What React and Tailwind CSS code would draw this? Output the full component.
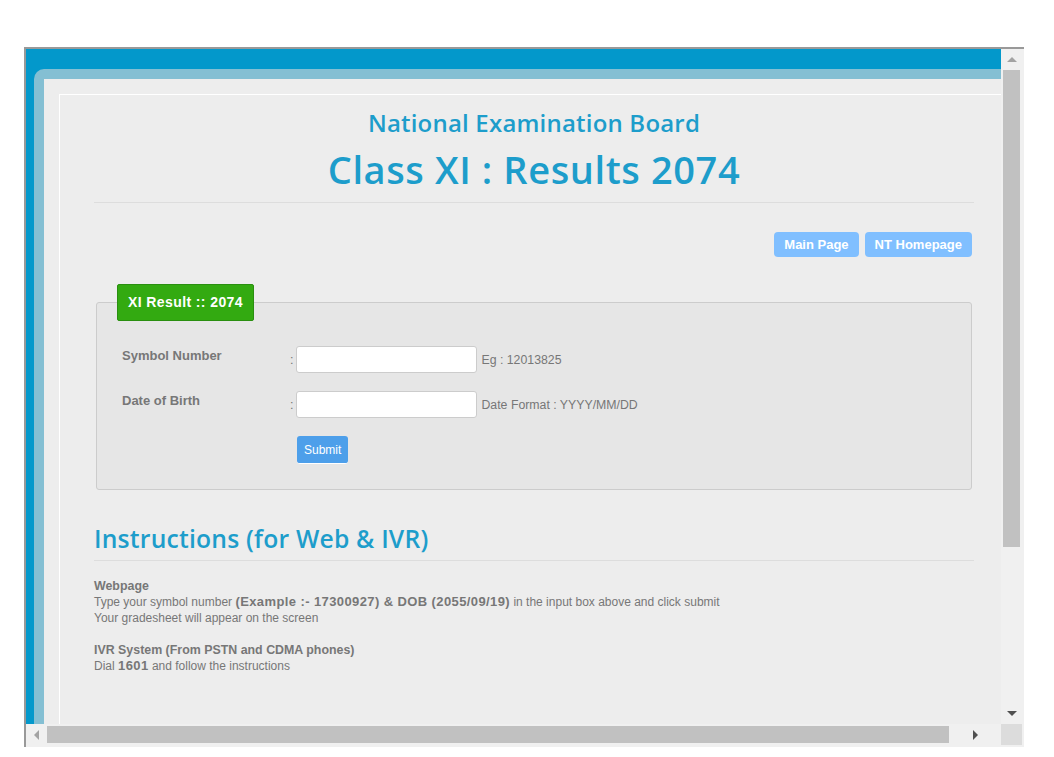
import React from 'react';

const head = { fontFamily: '"Open Sans", "DejaVu Sans", sans-serif' };

const ScrollArrow = ({ dir }) => {
  const pts = {
    up: '0,5 5,0 10,5',
    down: '0,0 10,0 5,5',
    left: '5,0 5,10 0,5',
    right: '0,0 5,5 0,10',
  }[dir];
  const vertical = dir === 'up' || dir === 'down';
  return (
    <svg width={vertical ? 10 : 5} height={vertical ? 5 : 10} viewBox={vertical ? '0 0 10 5' : '0 0 5 10'}>
      <polygon points={pts} fill={dir === 'down' || dir === 'right' ? '#505050' : '#a3a3a3'} />
    </svg>
  );
};

const FieldRow = ({ label, hint }) => (
  <div className="flex items-start">
    <div className="w-[168px] font-bold text-[13px] text-[#777]">{label}</div>
    <div className="flex items-center">
      <span className="text-[12.5px] text-[#777] mr-[3px] mt-[2px]">:</span>
      <input className="w-[181px] h-[27px] bg-white border border-[#ccc] rounded-[3px] outline-none" />
      <span className="ml-[4px] mt-[2px] text-[12.3px] text-[#777]">{hint}</span>
    </div>
  </div>
);

export default function App() {
  return (
    <div className="min-h-[757px] bg-white pt-[47px] pl-[24px]" style={{ fontFamily: '"Liberation Sans", Arial, sans-serif' }}>
      <div className="w-[1000px] h-[700px] border-t-2 border-l-2 border-[#999] bg-[#f0f0f0] flex flex-col">
        <div className="flex h-[675px]">
          {/* viewport */}
          <div className="w-[975px] h-full overflow-hidden bg-[#0398cb] pl-[8px] pt-[20px]">
            <div className="w-[1040px] bg-[#84bfd3] rounded-tl-[10px] pl-[10px] pt-[10px]">
              <div className="bg-[#ededed] pl-[15px] pt-[15px] pb-[40px]">
                <div className="w-[950px] border border-white px-[34px] pt-[10px] pb-[60px]">
                  <h1 className="text-center text-[#1d9dcb] text-[24px] font-semibold leading-[36px] tracking-[0.2px]" style={head}>
                    National Examination Board
                  </h1>
                  <h2 className="text-center text-[#1d9dcb] text-[38px] font-semibold leading-[50px] mt-[3px] tracking-[0.6px]" style={head}>
                    Class XI : Results 2074
                  </h2>
                  <div className="mt-[8px] h-px bg-[#ddd]" />

                  <div className="flex justify-end gap-[6px] mt-[29px] mr-[2px]">
                    <button className="h-[25px] px-[10px] rounded-[4px] bg-[#80bfff] text-white font-bold text-[13px]">
                      Main Page
                    </button>
                    <button className="h-[25px] px-[10px] rounded-[4px] bg-[#80bfff] text-white font-bold text-[13px]">
                      NT Homepage
                    </button>
                  </div>

                  {/* fieldset */}
                  <div className="relative mt-[45px] ml-[2px] w-[876px] h-[188px] bg-[#e6e6e6] border border-[#ccc] rounded-[3px]">
                    <div className="absolute left-[20px] top-[-19px] h-[37px] px-[10px] flex items-center bg-[#33aa11] border border-[#2a8f10] rounded-[2px] text-white font-bold text-[14px] tracking-[0.4px]">
                      XI Result :: 2074
                    </div>
                    <div className="pt-[43px] pl-[25px] flex flex-col gap-[18px]">
                      <FieldRow label="Symbol Number" hint="Eg : 12013825" />
                      <FieldRow label="Date of Birth" hint="Date Format : YYYY/MM/DD" />
                      <div className="pl-[175px]">
                        <button className="h-[28px] px-[7px] rounded-[3px] bg-[#4d9fea] text-white text-[12px] border-b border-white">
                          Submit
                        </button>
                      </div>
                    </div>
                  </div>

                  <h3 className="mt-[32px] text-[#1d9dcb] text-[24.7px] font-semibold leading-[34px] tracking-[0.2px]" style={head}>
                    Instructions (for Web &amp; IVR)
                  </h3>
                  <div className="mt-[4px] h-px bg-[#ddd]" />

                  <div className="mt-[17px] text-[12px] leading-[16px] text-[#777]">
                    <p className="font-bold text-[12.4px]">Webpage</p>
                    <p>
                      Type your symbol number{' '}
                      <b className="text-[13px] tracking-[0.4px]">(Example :- 17300927) &amp; DOB (2055/09/19)</b> in the input box above and click submit
                    </p>
                    <p>Your gradesheet will appear on the screen</p>
                    <p className="font-bold mt-[16px] text-[12.4px]">IVR System (From PSTN and CDMA phones)</p>
                    <p>
                      Dial <b className="text-[13px] tracking-[0.4px]">1601</b> and follow the instructions
                    </p>
                  </div>
                </div>
              </div>
            </div>
          </div>
          {/* vertical scrollbar */}
          <div className="w-[21px] h-full bg-[#f0f0f0] flex flex-col items-center">
            <div className="h-[21px] flex items-center justify-center">
              <ScrollArrow dir="up" />
            </div>
            <div className="w-[17px] h-[477px] bg-[#c1c1c1]" />
            <div className="flex-1" />
            <div className="h-[21px] flex items-center justify-center">
              <ScrollArrow dir="down" />
            </div>
          </div>
        </div>
        {/* horizontal scrollbar */}
        <div className="flex h-[21px]">
          <div className="w-[975px] flex items-center">
            <div className="w-[21px] flex justify-center">
              <ScrollArrow dir="left" />
            </div>
            <div className="h-[17px] w-[902px] bg-[#c1c1c1]" />
            <div className="flex-1 flex justify-center">
              <ScrollArrow dir="right" />
            </div>
          </div>
          <div className="w-[21px] bg-[#dcdcdc]" />
        </div>
      </div>
    </div>
  );
}
